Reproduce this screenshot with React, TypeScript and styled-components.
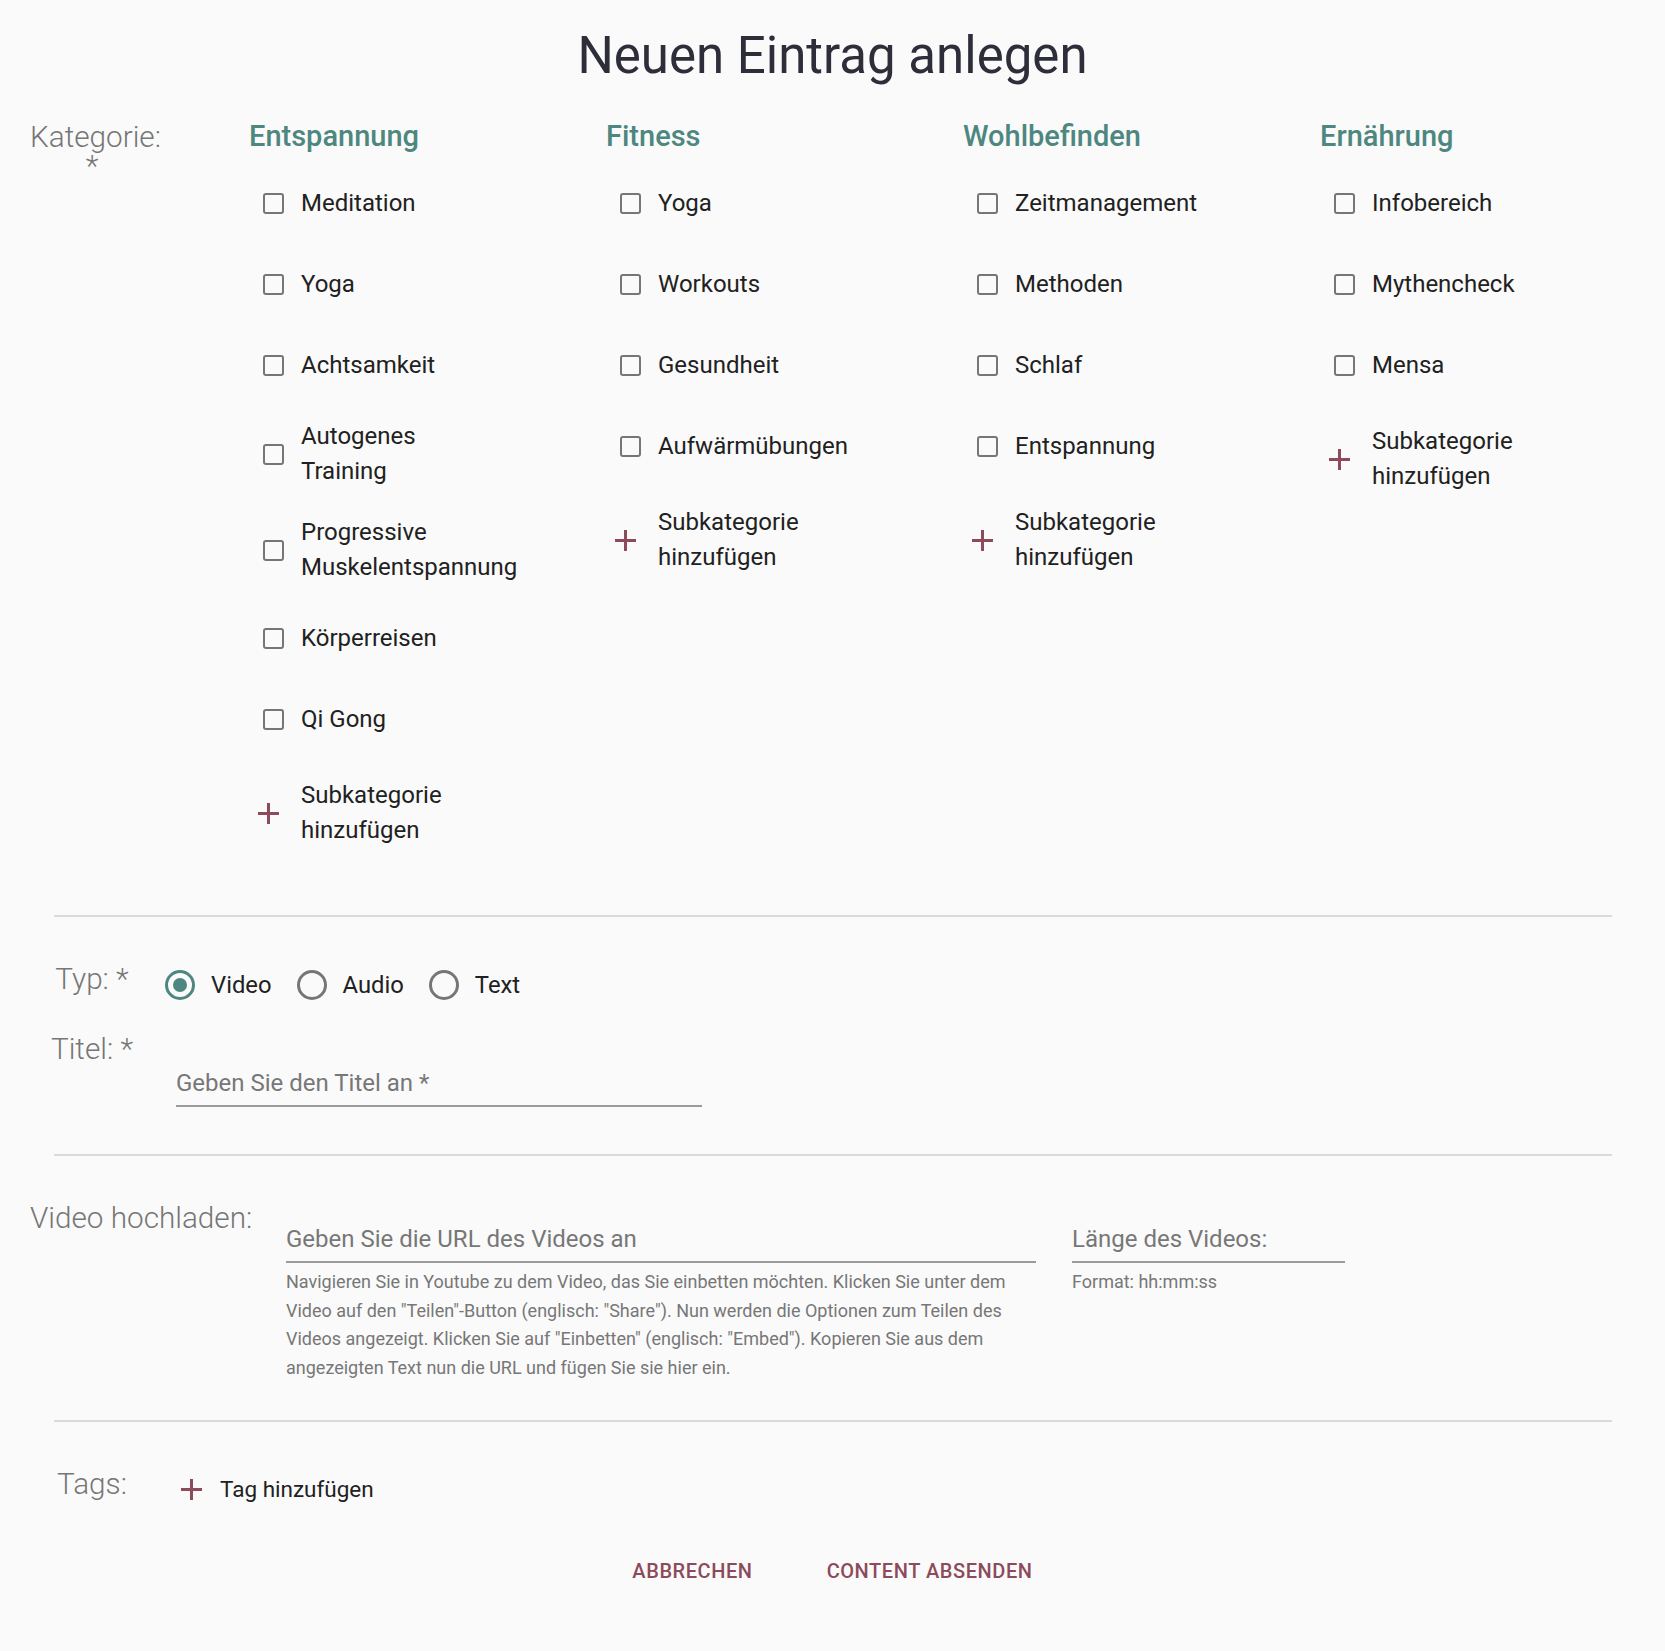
import React from "react";
import styled, { createGlobalStyle } from "styled-components";

const GlobalStyle = createGlobalStyle`
  html, body {
    margin: 0;
    padding: 0;
    background: #fafafa;
  }
  body {
    font-family: Roboto, "Noto Sans", "Liberation Sans", sans-serif;
    color: #212121;
  }
  * { box-sizing: border-box; }
`;

const TEAL = "#4d8780";
const MAROON = "#8c4a5a";
const GREY = "#767676";

const Page = styled.main`
  width: 1665px;
  min-height: 1651px;
  padding: 25px 0 60px;
  background: #fafafa;
`;

const Title = styled.h1`
  margin: 0 0 34px;
  font-size: 51px;
  line-height: 61px;
  font-weight: 400;
  color: #2e2e3a;
  text-align: center;
`;

const FieldLabel = styled.div<{ $lh?: number; $mt?: number; $nowrap?: boolean }>`
  flex: none;
  width: 124px;
  margin-top: ${(p) => p.$mt ?? 0}px;
  font-size: 29.7px;
  font-weight: 300;
  line-height: ${(p) => p.$lh ?? 33}px;
  color: ${GREY};
  text-align: center;
  white-space: ${(p) => (p.$nowrap ? "nowrap" : "normal")};
`;

const Row = styled.section<{ $mt?: number }>`
  display: flex;
  align-items: flex-start;
  padding-left: 30px;
  margin-top: ${(p) => p.$mt ?? 0}px;
`;

const CategoryGrid = styled.div`
  display: grid;
  grid-template-columns: repeat(4, 357px);
  margin-left: 95px;
`;

const Column = styled.div`
  display: flex;
  flex-direction: column;
`;

const ColumnTitle = styled.h2`
  margin: 0;
  font-size: 29px;
  font-weight: 500;
  line-height: 33px;
  color: ${TEAL};
`;

const OptionList = styled.ul`
  list-style: none;
  margin: 23px 0 0;
  padding: 0;
  display: flex;
  flex-direction: column;
  gap: 26px;
`;

const Option = styled.li<{ $add?: boolean }>`
  display: flex;
  align-items: center;
  min-height: 55px;
  margin-top: ${(p) => (p.$add ? 5 : 0)}px;
  cursor: pointer;
`;

const IconSlot = styled.span<{ $offset: number }>`
  flex: none;
  width: 52px;
  display: flex;
  align-items: center;
  padding-left: ${(p) => p.$offset}px;
`;

const CheckBox = styled.span`
  display: block;
  width: 21px;
  height: 21px;
  border: 2px solid ${GREY};
  border-radius: 3px;
`;

const OptionText = styled.span`
  max-width: 200px;
  font-size: 24px;
  line-height: 35px;
  color: #212121;
`;

const Divider = styled.hr<{ $mt: number }>`
  height: 2px;
  border: 0;
  background: #dadada;
  margin: ${(p) => p.$mt}px 53px 0 54px;
`;

const RadioGroup = styled.div`
  display: flex;
  align-items: center;
  gap: 25px;
  margin: 5px 0 0 11px;
`;

const RadioOption = styled.label`
  display: flex;
  align-items: center;
  height: 36px;
  gap: 16px;
  font-size: 23.8px;
  line-height: 35px;
  color: #212121;
  cursor: pointer;
`;

const RadioCircle = styled.span<{ $checked?: boolean }>`
  flex: none;
  width: 30px;
  height: 30px;
  border-radius: 50%;
  border: 3px solid ${(p) => (p.$checked ? TEAL : GREY)};
  display: flex;
  align-items: center;
  justify-content: center;

  &::after {
    content: "";
    display: ${(p) => (p.$checked ? "block" : "none")};
    width: 14px;
    height: 14px;
    border-radius: 50%;
    background: ${TEAL};
  }
`;

const Field = styled.div<{ $width: number; $ml: number; $mt: number }>`
  flex: none;
  width: ${(p) => p.$width}px;
  margin-left: ${(p) => p.$ml}px;
  margin-top: ${(p) => p.$mt}px;
`;

const Input = styled.input`
  display: block;
  width: 100%;
  height: 42px;
  border: 0;
  border-bottom: 2px solid #9b9b9b;
  background: transparent;
  padding: 4px 0 9px;
  font-family: inherit;
  font-size: 24px;
  line-height: 27px;
  color: #212121;
  outline: none;

  &::placeholder {
    color: #777777;
    opacity: 1;
  }
`;

const Helper = styled.p`
  margin: 5px 0 0;
  font-size: 18px;
  line-height: 28.5px;
  color: #777777;
`;

const AddTag = styled.button`
  display: flex;
  align-items: center;
  gap: 18px;
  margin: 5px 0 0 27px;
  padding: 0;
  border: 0;
  background: none;
  font-family: inherit;
  font-size: 22.5px;
  line-height: 35px;
  color: #212121;
  cursor: pointer;
`;

const Actions = styled.div`
  display: flex;
  justify-content: center;
  gap: 42px;
  margin-top: 46px;
`;

const TextButton = styled.button`
  padding: 6px 16px;
  border: 0;
  background: none;
  font-family: inherit;
  font-size: 20px;
  font-weight: 500;
  line-height: 24px;
  letter-spacing: 0.57px;
  text-transform: uppercase;
  color: ${MAROON};
  cursor: pointer;
`;

const PlusIcon = () => (
  <svg width="21" height="21" viewBox="5 5 14 14" aria-hidden="true">
    <path d="M19 13h-6v6h-2v-6H5v-2h6V5h2v6h6v2z" fill={MAROON} />
  </svg>
);

const categories: { name: string; items: string[] }[] = [
  {
    name: "Entspannung",
    items: [
      "Meditation",
      "Yoga",
      "Achtsamkeit",
      "Autogenes Training",
      "Progressive Muskelentspannung",
      "Körperreisen",
      "Qi Gong",
    ],
  },
  { name: "Fitness", items: ["Yoga", "Workouts", "Gesundheit", "Aufwärmübungen"] },
  {
    name: "Wohlbefinden",
    items: ["Zeitmanagement", "Methoden", "Schlaf", "Entspannung"],
  },
  { name: "Ernährung", items: ["Infobereich", "Mythencheck", "Mensa"] },
];

export default function App() {
  return (
    <>
      <GlobalStyle />
      <Page>
        <Title>Neuen Eintrag anlegen</Title>

        <Row>
          <FieldLabel $lh={29} $mt={2}>
            Kategorie: *
          </FieldLabel>
          <CategoryGrid>
            {categories.map((cat) => (
              <Column key={cat.name}>
                <ColumnTitle>{cat.name}</ColumnTitle>
                <OptionList>
                  {cat.items.map((item) => (
                    <Option key={item}>
                      <IconSlot $offset={14}>
                        <CheckBox />
                      </IconSlot>
                      <OptionText>{item}</OptionText>
                    </Option>
                  ))}
                  <Option $add>
                    <IconSlot $offset={9}>
                      <PlusIcon />
                    </IconSlot>
                    <OptionText>Subkategorie hinzufügen</OptionText>
                  </Option>
                </OptionList>
              </Column>
            ))}
          </CategoryGrid>
        </Row>

        <Divider $mt={67} />

        <Row $mt={45}>
          <FieldLabel>Typ: *</FieldLabel>
          <RadioGroup>
            <RadioOption>
              <RadioCircle $checked />
              Video
            </RadioOption>
            <RadioOption>
              <RadioCircle />
              Audio
            </RadioOption>
            <RadioOption>
              <RadioCircle />
              Text
            </RadioOption>
          </RadioGroup>
        </Row>

        <Row $mt={29}>
          <FieldLabel>Titel: *</FieldLabel>
          <Field $width={526} $ml={22} $mt={33}>
            <Input placeholder="Geben Sie den Titel an *" />
          </Field>
        </Row>

        <Divider $mt={47} />

        <Row $mt={45}>
          <FieldLabel $nowrap>Video hochladen:</FieldLabel>
          <Field $width={750} $ml={132} $mt={20}>
            <Input placeholder="Geben Sie die URL des Videos an" />
            <Helper>
              Navigieren Sie in Youtube zu dem Video, das Sie einbetten möchten. Klicken Sie
              unter dem Video auf den "Teilen"-Button (englisch: "Share"). Nun werden die
              Optionen zum Teilen des Videos angezeigt. Klicken Sie auf "Einbetten" (englisch:
              "Embed"). Kopieren Sie aus dem angezeigten Text nun die URL und fügen Sie sie
              hier ein.
            </Helper>
          </Field>
          <Field $width={273} $ml={36} $mt={20}>
            <Input placeholder="Länge des Videos:" />
            <Helper>Format: hh:mm:ss</Helper>
          </Field>
        </Row>

        <Divider $mt={38} />

        <Row $mt={45}>
          <FieldLabel>Tags:</FieldLabel>
          <AddTag type="button">
            <PlusIcon />
            Tag hinzufügen
          </AddTag>
        </Row>

        <Actions>
          <TextButton type="button">Abbrechen</TextButton>
          <TextButton type="button">Content absenden</TextButton>
        </Actions>
      </Page>
    </>
  );
}
